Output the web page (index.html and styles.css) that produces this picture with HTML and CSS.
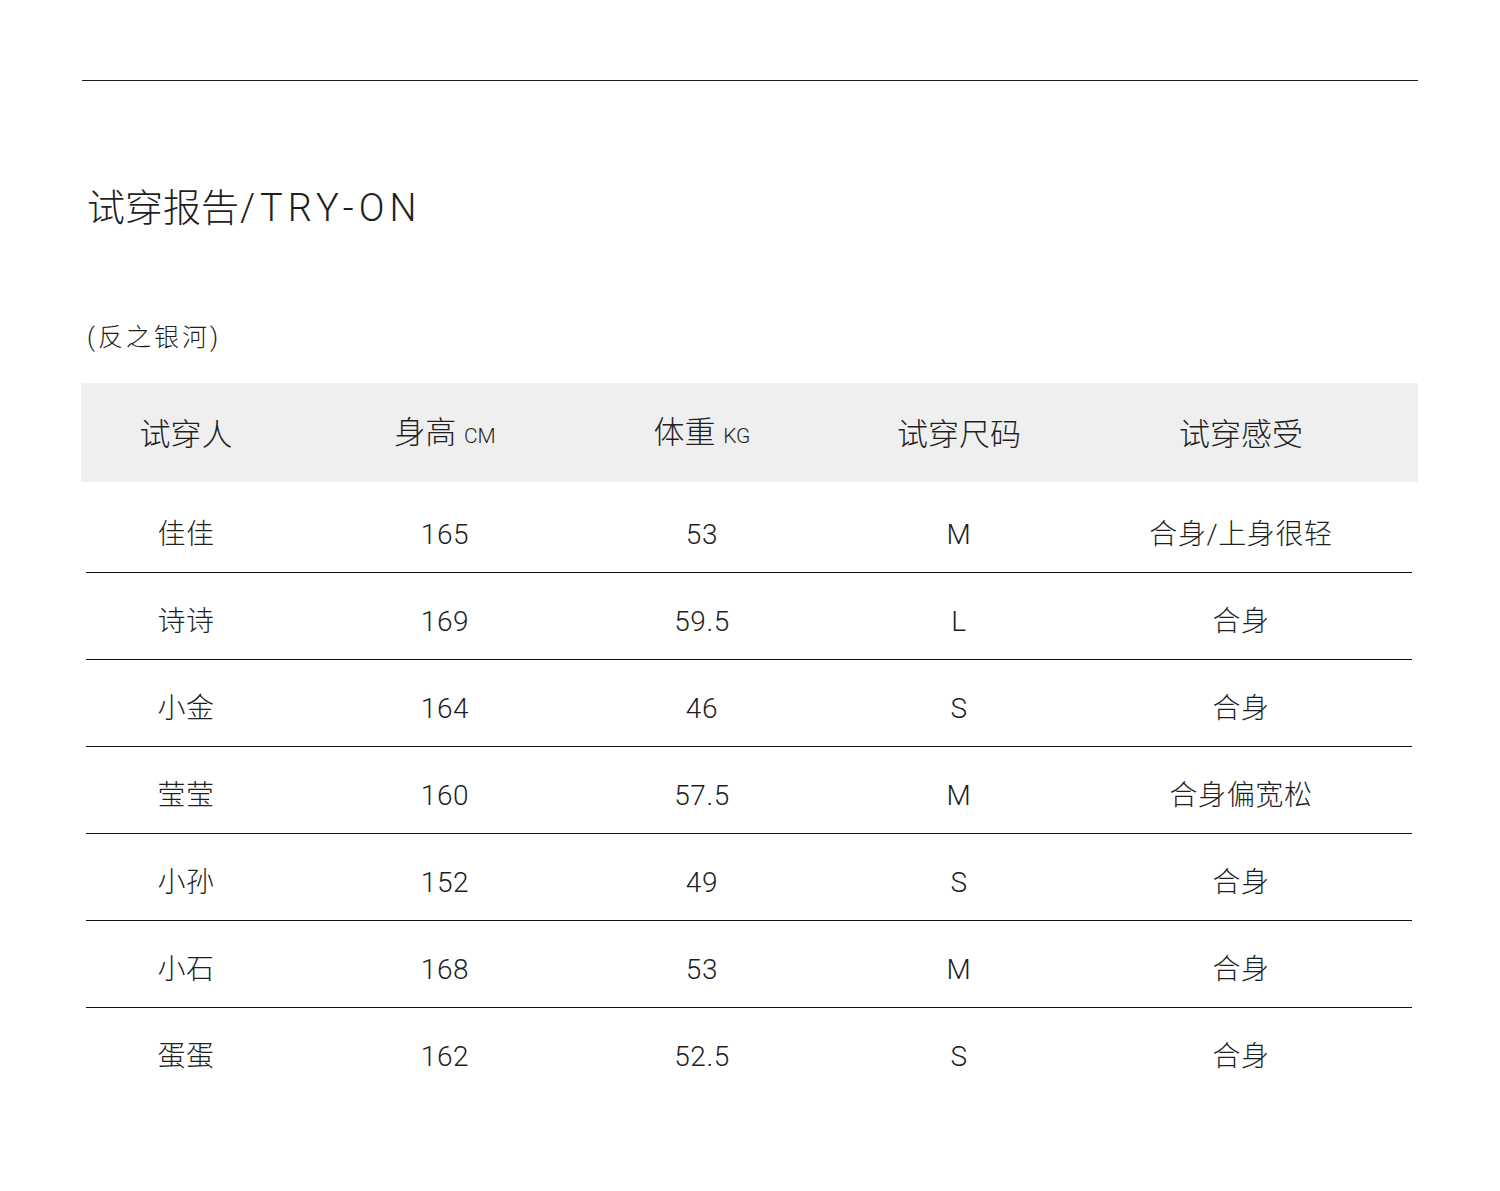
FILE: index.html
```html
<!DOCTYPE html>
<html lang="zh">
<head>
<meta charset="utf-8">
<title>试穿报告</title>
<link rel="stylesheet" href="styles.css">
</head>
<body>
<div class="page">
  <div class="topline"></div>
  <h1 class="title">试穿报告<span class="latin">/TRY-ON</span></h1>
  <p class="subtitle">(反之银河)</p>
  <div class="table">
    <div class="thead">
      <div class="cell">试穿人</div>
      <div class="cell">身高 <span class="unit">CM</span></div>
      <div class="cell">体重 <span class="unit">KG</span></div>
      <div class="cell">试穿尺码</div>
      <div class="cell">试穿感受</div>
    </div>
    <div class="row"><div class="cell">佳佳</div><div class="cell">165</div><div class="cell">53</div><div class="cell">M</div><div class="cell">合身/上身很轻</div></div>
    <div class="row"><div class="cell">诗诗</div><div class="cell">169</div><div class="cell">59.5</div><div class="cell">L</div><div class="cell">合身</div></div>
    <div class="row"><div class="cell">小金</div><div class="cell">164</div><div class="cell">46</div><div class="cell">S</div><div class="cell">合身</div></div>
    <div class="row"><div class="cell">莹莹</div><div class="cell">160</div><div class="cell">57.5</div><div class="cell">M</div><div class="cell">合身偏宽松</div></div>
    <div class="row"><div class="cell">小孙</div><div class="cell">152</div><div class="cell">49</div><div class="cell">S</div><div class="cell">合身</div></div>
    <div class="row"><div class="cell">小石</div><div class="cell">168</div><div class="cell">53</div><div class="cell">M</div><div class="cell">合身</div></div>
    <div class="row last"><div class="cell">蛋蛋</div><div class="cell">162</div><div class="cell">52.5</div><div class="cell">S</div><div class="cell">合身</div></div>
  </div>
</div>
</body>
</html>
```

FILE: styles.css
```css
html, body {
  margin: 0;
  padding: 0;
  background: #ffffff;
}
body {
  font-family: Roboto, "Noto Sans CJK SC", sans-serif;
  font-weight: 300;
  color: #1f1f1f;
}
.page {
  width: 1337px;
  margin-left: 81px;
  padding-top: 80px;
  padding-bottom: 100px;
}
.topline {
  height: 1px;
  background: #1e1b16;
  margin-left: 1px;
}
.title {
  margin: 107px 0 0 6px;
  font-size: 38px;
  line-height: 40px;
  font-weight: 300;
}
.title .latin {
  letter-spacing: 5px;
  margin-left: 1px;
}
.subtitle {
  margin: 95px 0 0 6px;
  font-size: 25px;
  line-height: 30px;
  font-weight: 300;
  letter-spacing: 3px;
}
.table {
  margin-top: 30px;
}
.thead,
.row {
  display: grid;
  grid-template-columns: 200px 318px 196px 318px 246px 1fr;
  text-align: center;
}
.thead {
  background: #efefef;
  padding: 0 5px;
  height: 99px;
  align-items: center;
  font-size: 31px;
  line-height: 40px;
}
.thead .cell {
  padding-top: 4px;
}
.unit {
  font-size: 21px;
}
.row {
  margin: 4px 6px 0 5px;
  padding: 35px 0 24px;
  border-bottom: 1px solid #111111;
  font-size: 28px;
  line-height: 27px;
  letter-spacing: 0.6px;
}
.row + .row {
  margin-top: 0;
}
.row.last {
  border-bottom: none;
}
```
